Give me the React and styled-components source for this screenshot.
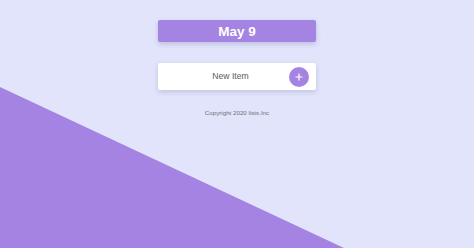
import styled, { createGlobalStyle } from 'styled-components';

const GlobalStyle = createGlobalStyle`
  html, body {
    margin: 0;
    padding: 0;
  }
  body {
    background: #e1e4fb;
    font-family: 'Liberation Sans', Arial, sans-serif;
  }
`;

const Page = styled.div`
  position: relative;
  width: 474px;
  height: 248px;
  overflow: hidden;
  background: #e1e4fb;

  &::before {
    content: '';
    position: absolute;
    inset: 0;
    background: #a583e2;
    clip-path: polygon(0 87px, 344px 248px, 0 248px);
  }
`;

const Column = styled.div`
  position: relative;
  width: 158px;
  margin: 0 auto;
  padding-top: 20px;
  display: flex;
  flex-direction: column;
  align-items: stretch;
`;

const DateBar = styled.div`
  height: 22px;
  border-radius: 2px;
  background: #a583e2;
  box-shadow: 0 2px 5px rgba(90, 80, 140, 0.25);
  display: flex;
  align-items: center;
  justify-content: center;
  color: #ffffff;
  font-weight: bold;
  font-size: 13.5px;
`;

const InputCard = styled.div`
  margin-top: 21px;
  height: 27px;
  border-radius: 2px;
  background: #ffffff;
  box-shadow: 0 2px 5px rgba(90, 80, 140, 0.22);
  display: flex;
  align-items: center;
  padding: 0 7px 0 10px;
`;

const ItemInput = styled.div`
  flex: 1;
  text-align: center;
  font-size: 8.6px;
  color: #5a5a60;
  padding-left: 4px;
  margin-top: -1px;
`;

const AddButton = styled.div`
  width: 20px;
  height: 20px;
  border-radius: 50%;
  background: #a583e2;
  color: #ffffff;
  display: flex;
  align-items: center;
  justify-content: center;
`;

const Copyright = styled.p`
  margin: 19px 0 0;
  text-align: center;
  font-size: 6.2px;
  color: #6f6f7a;
`;

function App() {
  return (
    <Page>
      <GlobalStyle />
      <Column>
        <DateBar>May 9</DateBar>
        <InputCard>
          <ItemInput>New Item</ItemInput>
          <AddButton>
            <svg width="8" height="8" viewBox="0 0 8 8">
              <path d="M4 0.5v7M0.5 4h7" stroke="#fff" strokeWidth="1.2" />
            </svg>
          </AddButton>
        </InputCard>
        <Copyright>Copyright 2020 lists.Inc</Copyright>
      </Column>
    </Page>
  );
}

export default App;
